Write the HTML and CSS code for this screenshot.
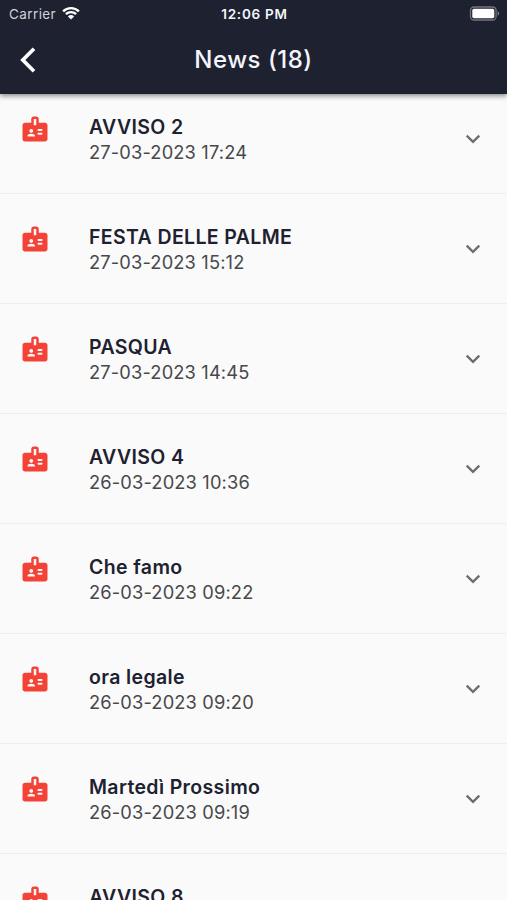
FILE: index.html
```
<!DOCTYPE html>
<html lang="it">
<head>
<meta charset="utf-8">
<title>News</title>
<link rel="stylesheet" href="styles.css">
</head>
<body>
<svg width="0" height="0" class="defs">
<symbol id="badge" viewBox="0 0 24 24"><path fill-rule="evenodd" d="M20 7h-5V4c0-1.1-.9-2-2-2h-2c-1.1 0-2 .9-2 2v3H4c-1.1 0-2 .9-2 2v11c0 1.1.9 2 2 2h16c1.1 0 2-.9 2-2V9c0-1.1-.9-2-2-2zM9 12c.83 0 1.5.67 1.5 1.5S9.83 15 9 15s-1.500-.67-1.500-1.500S8.170 12 9 12zm3 6H6v-.43c0-.6.36-1.150.92-1.390.65-.28 1.350-.43 2.080-.43s1.430.15 2.080.43c.55.24.92.78.92 1.390V18zm1-9h-2V4h2v5zm4.250 7.500h-2.500c-.41 0-.75-.34-.75-.75s.34-.75.75-.75h2.500c.41 0 .75.34.75.75s-.34.75-.75.75zm0-3h-2.500c-.41 0-.75-.34-.75-.75s.34-.75.75-.75h2.500c.41 0 .75.34.75.75s-.34.75-.75.75z"/></symbol>
<symbol id="chevron" viewBox="0 0 16 10"><path d="M1.700 1.600 8 7.900l6.300-6.300" fill="none" stroke="currentColor" stroke-width="2.300"/></symbol>
</svg>
<header class="header">
<div class="status">
<div class="carrier"><span>Carrier</span><svg class="wifi" viewBox="0 0 18 14"><path d="M1.100 5.300a11.300 11.300 0 0 1 15.800 0M3.900 8.200a7.300 7.300 0 0 1 10.200 0" fill="none" stroke="#fff" stroke-width="2.400"/><path d="M9 13.600 5.900 10.500a4.500 4.500 0 0 1 6.200 0z" fill="#fff"/></svg></div>
<div class="clock">12:06 PM</div>
<svg class="battery" viewBox="0 0 31 16"><rect x="1.500" y="1" width="25.600" height="13" rx="3.500" fill="none" stroke="#73747f" stroke-width="1.300"/><rect x="3.300" y="2.800" width="22" height="9.400" rx="1.600" fill="#fff"/><path d="M28.700 5.300c2 .8 2 3.600 0 4.400z" fill="#85868f"/></svg>
</div>
<div class="nav">
<svg class="back" viewBox="0 0 16 26"><path d="M14 1.700 2.800 13 14 24.300" fill="none" stroke="#fff" stroke-width="3.700"/></svg>
<h1 class="title">News (18)</h1>
</div>
</header>
<main class="list">
<article class="row"><svg class="badge"><use href="#badge"/></svg><div class="text"><h2>AVVISO 2</h2><p>27-03-2023 17:24</p></div><svg class="chevron"><use href="#chevron"/></svg></article>
<article class="row"><svg class="badge"><use href="#badge"/></svg><div class="text"><h2>FESTA DELLE PALME</h2><p>27-03-2023 15:12</p></div><svg class="chevron"><use href="#chevron"/></svg></article>
<article class="row"><svg class="badge"><use href="#badge"/></svg><div class="text"><h2>PASQUA</h2><p>27-03-2023 14:45</p></div><svg class="chevron"><use href="#chevron"/></svg></article>
<article class="row"><svg class="badge"><use href="#badge"/></svg><div class="text"><h2>AVVISO 4</h2><p>26-03-2023 10:36</p></div><svg class="chevron"><use href="#chevron"/></svg></article>
<article class="row"><svg class="badge"><use href="#badge"/></svg><div class="text"><h2>Che famo</h2><p>26-03-2023 09:22</p></div><svg class="chevron"><use href="#chevron"/></svg></article>
<article class="row"><svg class="badge"><use href="#badge"/></svg><div class="text"><h2>ora legale</h2><p>26-03-2023 09:20</p></div><svg class="chevron"><use href="#chevron"/></svg></article>
<article class="row"><svg class="badge"><use href="#badge"/></svg><div class="text"><h2>Martedì Prossimo</h2><p>26-03-2023 09:19</p></div><svg class="chevron"><use href="#chevron"/></svg></article>
<article class="row"><svg class="badge"><use href="#badge"/></svg><div class="text"><h2>AVVISO 8</h2></div></article>
</main>
</body>
</html>
```
FILE: styles.css
```
* { box-sizing: border-box; margin: 0; padding: 0; }
body { height: 900px; overflow: hidden; display: flex; flex-direction: column; background: #fafafa; font-family: Inter, sans-serif; }
svg { display: block; flex: none; }
.defs { display: none; }
.header { flex: none; height: 94px; background: #1e2130; color: #f4f5fb; box-shadow: 0 2px 5px rgba(0, 0, 0, .45); position: relative; z-index: 1; }
.status { height: 27px; padding: 0 7px 0 9px; display: grid; grid-template-columns: 1fr auto 1fr; align-items: center; }
.carrier { display: flex; align-items: center; gap: 6px; font-size: 13.500px; letter-spacing: .4px; color: #d0d1da; }
.wifi { width: 18px; height: 14px; margin-top: -2px; }
.clock { font-size: 13.500px; font-weight: 600; letter-spacing: .75px; }
.battery { width: 31px; height: 16px; justify-self: end; }
.nav { height: 66px; display: grid; grid-template-columns: 36px 1fr 36px; align-items: center; }
.back { width: 16px; height: 26px; margin-left: 20px; }
.title { font-size: 24px; line-height: 30px; font-weight: 500; text-align: center; letter-spacing: .5px; }
.list { flex: none; height: 816px; margin-top: -10px; overflow: hidden; }
.row { height: 110px; padding: 30px 26px 0 20px; display: flex; align-items: flex-start; border-bottom: 1px solid #eeeeef; color: #1e2130; }
.badge { width: 30px; height: 30px; fill: #f44336; }
.text { flex: 1; margin: 1px 0 0 39px; }
.text h2 { font-size: 19.500px; line-height: 25px; font-weight: 640; letter-spacing: .37px; }
.text p { font-size: 18.300px; line-height: 25px; color: #48484a; letter-spacing: .14px; }
.chevron { width: 16px; height: 10px; margin-top: 20px; color: #6d6d6d; }
```
